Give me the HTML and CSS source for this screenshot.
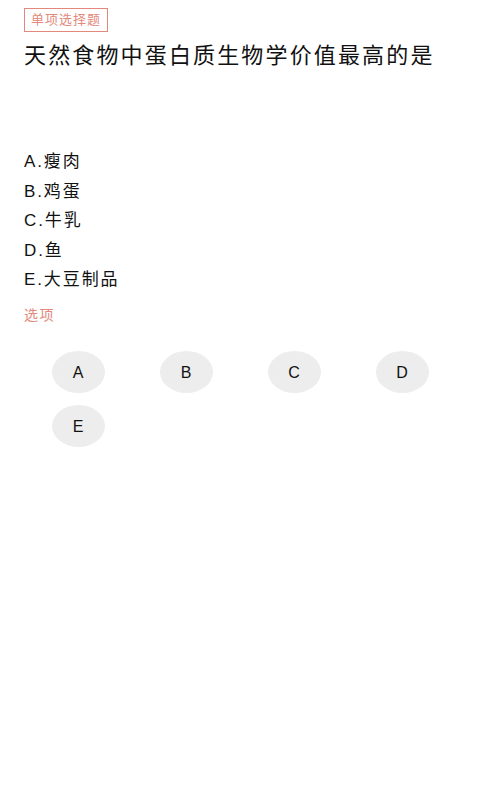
FILE: index.html
```html
<!DOCTYPE html>
<html>

<head>
  <meta charset="UTF-8">
  <meta name="viewport" content="width=device-width, initial-scale=1">
  <title>单项选择题</title>
  <link rel="stylesheet" href="styles.css">
</head>

<body>
  <div class="page">
    <div class="tag">单项选择题</div>
    <div class="question">天然食物中蛋白质生物学价值最高的是</div>
    <div class="options">
      <div class="option">A.瘦肉</div>
      <div class="option">B.鸡蛋</div>
      <div class="option">C.牛乳</div>
      <div class="option">D.鱼</div>
      <div class="option">E.大豆制品</div>
    </div>
    <div class="label">选项</div>
    <div class="choices">
      <div class="cell"><div class="pill">A</div></div>
      <div class="cell"><div class="pill">B</div></div>
      <div class="cell"><div class="pill">C</div></div>
      <div class="cell"><div class="pill">D</div></div>
      <div class="cell"><div class="pill">E</div></div>
    </div>
  </div>
</body>

</html>
```

FILE: styles.css
```css
body {
  margin: 0;
  background-color: #ffffff;
  font-family: "Liberation Sans", "Noto Sans CJK SC", sans-serif;
  color: #1a1a1a;
}

.page {
  padding: 8px 24px;
}

.tag {
  display: inline-block;
  box-sizing: border-box;
  height: 24px;
  padding: 0 6px;
  border: 1px solid #e3897c;
  font-size: 13px;
  line-height: 22px;
  letter-spacing: 1px;
  color: #e3897c;
}

.question {
  margin-top: 10px;
  font-size: 22px;
  line-height: 28px;
  letter-spacing: 2.15px;
  color: #111111;
}

.options {
  margin-top: 77px;
}

.option {
  font-size: 17px;
  line-height: 29.5px;
  letter-spacing: 1.9px;
  color: #111111;
}

.label {
  margin-top: 8px;
  font-size: 14px;
  line-height: 24px;
  letter-spacing: 1.5px;
  color: #e3897c;
}

.choices {
  display: grid;
  grid-template-columns: repeat(4, 1fr);
  row-gap: 12px;
  margin-top: 24px;
}

.cell {
  display: flex;
  justify-content: center;
}

.pill {
  width: 53px;
  height: 42px;
  border-radius: 50%;
  background-color: #ededed;
  font-size: 16px;
  line-height: 43px;
  text-align: center;
  color: #111111;
}
```
